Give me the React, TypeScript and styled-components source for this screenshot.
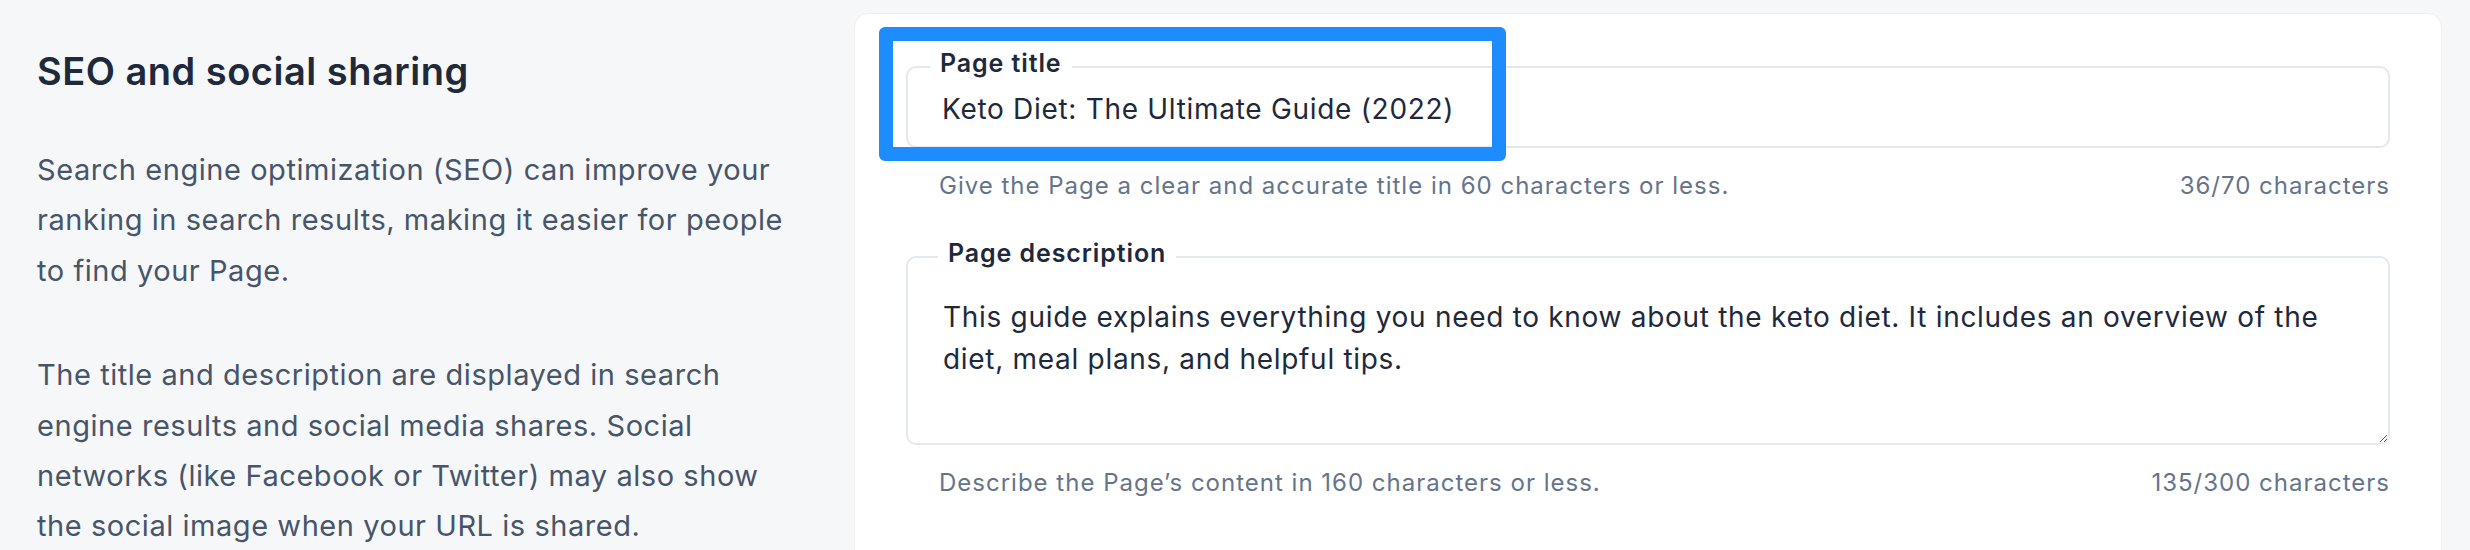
import styled, { createGlobalStyle } from "styled-components";

const GlobalStyle = createGlobalStyle`
  html, body {
    margin: 0;
    padding: 0;
    background: #f6f7f9;
  }
  body {
    font-family: Inter, "Noto Sans", sans-serif;
    -webkit-font-smoothing: antialiased;
  }
  * {
    box-sizing: border-box;
  }
`;

const Page = styled.div`
  display: grid;
  grid-template-columns: 760px 1fr;
  column-gap: 57px;
  height: 550px;
  overflow: hidden;
  padding: 13px 28px 0 37px;
`;

const Intro = styled.section`
  padding-top: 36px;
`;

const Heading = styled.h2`
  margin: 0 0 52px;
  font-size: 38px;
  line-height: 44px;
  font-weight: 600;
  letter-spacing: 0.5px;
  color: #1e293b;
`;

const Paragraph = styled.p`
  margin: 0 0 54px;
  font-size: 29px;
  line-height: 50.4px;
  letter-spacing: 0.55px;
  color: #475569;
`;

const Card = styled.div`
  background: #ffffff;
  border: 1px solid #eceff3;
  border-radius: 14px;
  padding: 35px 51px;
  min-height: 620px;
`;

const FieldGroup = styled.div<{ $gap?: number }>`
  position: relative;
  margin-top: ${(p) => p.$gap ?? 0}px;
`;

const Field = styled.fieldset<{ $bottom?: number }>`
  margin: 0;
  min-width: 0;
  padding: 0 0 ${(p) => p.$bottom ?? 0}px 22px;
  border: 2px solid #e4e9f0;
  border-radius: 10px;
`;

const Legend = styled.legend<{ $indent?: number }>`
  margin-left: ${(p) => p.$indent ?? 0}px;
  padding: 0 10px 8px;
  font-size: 25px;
  line-height: 28px;
  font-weight: 600;
  letter-spacing: 0.9px;
  color: #1e293b;
`;

const TextInput = styled.input`
  display: block;
  width: 100%;
  height: 48px;
  padding: 0 12px;
  border: none;
  outline: none;
  background: transparent;
  font-family: inherit;
  font-size: 28px;
  letter-spacing: 0.7px;
  color: #1e293b;
`;

const TextArea = styled.textarea`
  display: block;
  width: 100%;
  height: 168px;
  padding: 21px 50px 0 13px;
  border: none;
  outline: none;
  border-radius: 0 0 8px 0;
  background: transparent;
  resize: vertical;
  font-family: inherit;
  font-size: 28px;
  line-height: 42px;
  letter-spacing: 0.7px;
  color: #1e293b;
`;

const HintRow = styled.div`
  display: flex;
  justify-content: space-between;
  margin-top: 23px;
  padding-left: 33px;
  font-size: 24px;
  line-height: 30px;
  letter-spacing: 1px;
  color: #64748b;
`;

const Highlight = styled.div`
  position: absolute;
  top: -22px;
  left: -27px;
  width: 627px;
  height: 134px;
  border: 14px solid #1d8cff;
  border-radius: 6px;
  pointer-events: none;
`;

export default function App() {
  return (
    <>
      <GlobalStyle />
      <Page>
        <Intro>
          <Heading>SEO and social sharing</Heading>
          <Paragraph>
            Search engine optimization (SEO) can improve your ranking in search
            results, making it easier for people to find your Page.
          </Paragraph>
          <Paragraph>
            The title and description are displayed in search engine results
            and social media shares. Social networks (like Facebook or Twitter)
            may also show the social image when your URL is shared.
          </Paragraph>
        </Intro>
        <Card>
          <FieldGroup>
            <Field $bottom={13}>
              <Legend>Page title</Legend>
              <TextInput defaultValue="Keto Diet: The Ultimate Guide (2022)" />
            </Field>
            <Highlight />
          </FieldGroup>
          <HintRow>
            <span>Give the Page a clear and accurate title in 60 characters or less.</span>
            <span>36/70 characters</span>
          </HintRow>
          <FieldGroup $gap={38}>
            <Field>
              <Legend $indent={8}>Page description</Legend>
              <TextArea defaultValue="This guide explains everything you need to know about the keto diet. It includes an overview of the diet, meal plans, and helpful tips." />
            </Field>
          </FieldGroup>
          <HintRow>
            <span>Describe the Page’s content in 160 characters or less.</span>
            <span>135/300 characters</span>
          </HintRow>
        </Card>
      </Page>
    </>
  );
}
